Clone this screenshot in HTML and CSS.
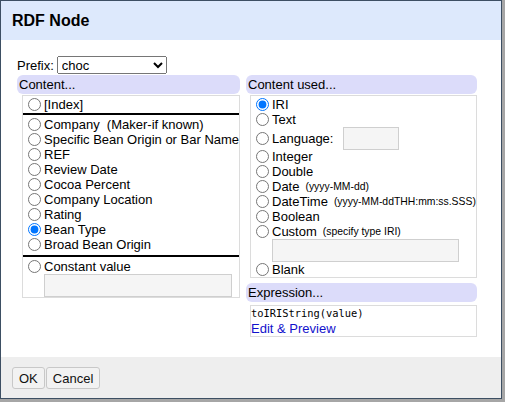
FILE: index.html
```html
<!DOCTYPE html>
<html>
<head>
<meta charset="utf-8">
<title>RDF Node</title>
<link rel="stylesheet" href="styles.css">
</head>
<body>
<div class="dialog">
  <div class="dialog-header">RDF Node</div>
  <div class="dialog-body">
    <div class="prefix-row">
      <label class="prefix-label">Prefix:</label>
      <select class="prefix-select"><option>choc</option></select>
    </div>
    <div class="columns">
      <div class="col col-left">
        <div class="section-title">Content...</div>
        <div class="box box-left">
          <label class="opt"><input type="radio" name="content">[Index]</label>
          <div class="sep sep-top"></div>
          <label class="opt"><input type="radio" name="content">Company  (Maker-if known)</label>
          <label class="opt"><input type="radio" name="content">Specific Bean Origin or Bar Name</label>
          <label class="opt"><input type="radio" name="content">REF</label>
          <label class="opt"><input type="radio" name="content">Review Date</label>
          <label class="opt"><input type="radio" name="content">Cocoa Percent</label>
          <label class="opt"><input type="radio" name="content">Company Location</label>
          <label class="opt"><input type="radio" name="content">Rating</label>
          <label class="opt"><input type="radio" name="content" checked>Bean Type</label>
          <label class="opt"><input type="radio" name="content">Broad Bean Origin</label>
          <div class="sep sep-bottom"></div>
          <label class="opt"><input type="radio" name="content">Constant value</label>
          <input type="text" class="text-input const-input">
        </div>
      </div>
      <div class="col col-right">
        <div class="section-title">Content used...</div>
        <div class="box box-right">
          <label class="opt"><input type="radio" name="used" checked>IRI</label>
          <label class="opt"><input type="radio" name="used">Text</label>
          <label class="opt opt-lang"><input type="radio" name="used">Language:<input type="text" class="lang-input"></label>
          <label class="opt"><input type="radio" name="used">Integer</label>
          <label class="opt"><input type="radio" name="used">Double</label>
          <label class="opt"><input type="radio" name="used">Date<span class="note">(yyyy-MM-dd)</span></label>
          <label class="opt"><input type="radio" name="used">DateTime<span class="note">(yyyy-MM-ddTHH:mm:ss.SSS)</span></label>
          <label class="opt"><input type="radio" name="used">Boolean</label>
          <label class="opt"><input type="radio" name="used">Custom<span class="note">(specify type IRI)</span></label>
          <input type="text" class="text-input custom-input">
          <label class="opt"><input type="radio" name="used">Blank</label>
        </div>
        <div class="section-title expr-title">Expression...</div>
        <div class="box expr-box">
          <div class="code">toIRIString(value)</div>
          <a class="link" href="#">Edit &amp; Preview</a>
        </div>
      </div>
    </div>
  </div>
  <div class="dialog-footer">
    <button class="btn">OK</button><button class="btn">Cancel</button>
  </div>
</div>
</body>
</html>
```

FILE: styles.css
```css
body {
  margin: 0;
  background: #a6a6a6;
  font-family: "Liberation Sans", Arial, sans-serif;
  font-size: 13px;
  color: #000;
}

.dialog {
  width: 502px;
  height: 399px;
  box-sizing: border-box;
  border: 1px solid #3d4f63;
  background: #fff;
  display: flex;
  flex-direction: column;
}

.dialog-header {
  height: 39px;
  flex: none;
  background: #dde9fc;
  font-weight: bold;
  font-size: 16px;
  padding-left: 11px;
  display: flex;
  align-items: center;
}

.dialog-body {
  flex: 1;
  padding: 16px 0 0 16px;
}

.prefix-row {
  height: 18px;
  display: flex;
  align-items: center;
}

.prefix-label {
  margin-right: 3px;
}

.prefix-select {
  width: 110px;
  height: 18px;
  font-family: "Liberation Sans", Arial, sans-serif;
  font-size: 13px;
  margin: 0;
}

.columns {
  display: flex;
  gap: 6px;
  margin-top: 1px;
  align-items: flex-start;
}

.col-left {
  width: 223px;
}

.col-right {
  width: 231px;
}

.section-title {
  height: 19px;
  line-height: 19px;
  background: #dcdcfa;
  border-radius: 6px;
  padding-left: 2px;
}

.box {
  border: 1px solid #dcdcdc;
}

.box-left {
  margin: 1px 0 0 5px;
  padding-top: 1px;
}

.box-right {
  margin: 1px 0 0 4px;
  padding-top: 1px;
}

.opt {
  display: flex;
  align-items: center;
  height: 15px;
  white-space: pre;
}

.opt input[type="radio"] {
  width: 13px;
  height: 13px;
  margin: 0 3px 0 5px;
  flex: none;
}

.opt-lang {
  height: 22px;
}

.sep {
  height: 2px;
  background: #000;
}

.sep-top {
  margin: 1px 0 2px;
}

.sep-bottom {
  margin: 3px 0 2px;
}

.text-input {
  display: block;
  height: 23px;
  box-sizing: border-box;
  border: 1px solid #cfcfcf;
  background: #f5f5f5;
  margin: 0 0 0 21px;
  padding: 0;
}

.const-input {
  width: 188px;
}

.custom-input {
  width: 187px;
}

.lang-input {
  width: 56px;
  height: 23px;
  box-sizing: border-box;
  border: 1px solid #cfcfcf;
  background: #f5f5f5;
  margin: 0 0 0 10px;
  padding: 0;
  flex: none;
}

.note {
  font-size: 10.4px;
  margin-left: 6px;
}

.expr-title {
  margin-top: 5px;
}

.expr-box {
  margin: 3px 0 0 4px;
  line-height: 15px;
}

.code {
  font-family: "DejaVu Sans Mono", monospace;
  font-size: 10.4px;
  height: 15px;
}

.link {
  display: block;
  color: #1111cc;
  text-decoration: none;
  height: 15px;
}

.dialog-footer {
  height: 41px;
  flex: none;
  box-sizing: border-box;
  background: #eeeeee;
  padding: 10px 0 0 11px;
  display: flex;
  align-items: flex-start;
}

.btn {
  height: 22px;
  padding: 0 6px;
  margin: 0 1px 0 0;
  font-family: "Liberation Sans", Arial, sans-serif;
  font-size: 13px;
  color: #111;
  background: #f2f2f2;
  border: 1px solid #c8c8c8;
  border-radius: 3px;
}
```
